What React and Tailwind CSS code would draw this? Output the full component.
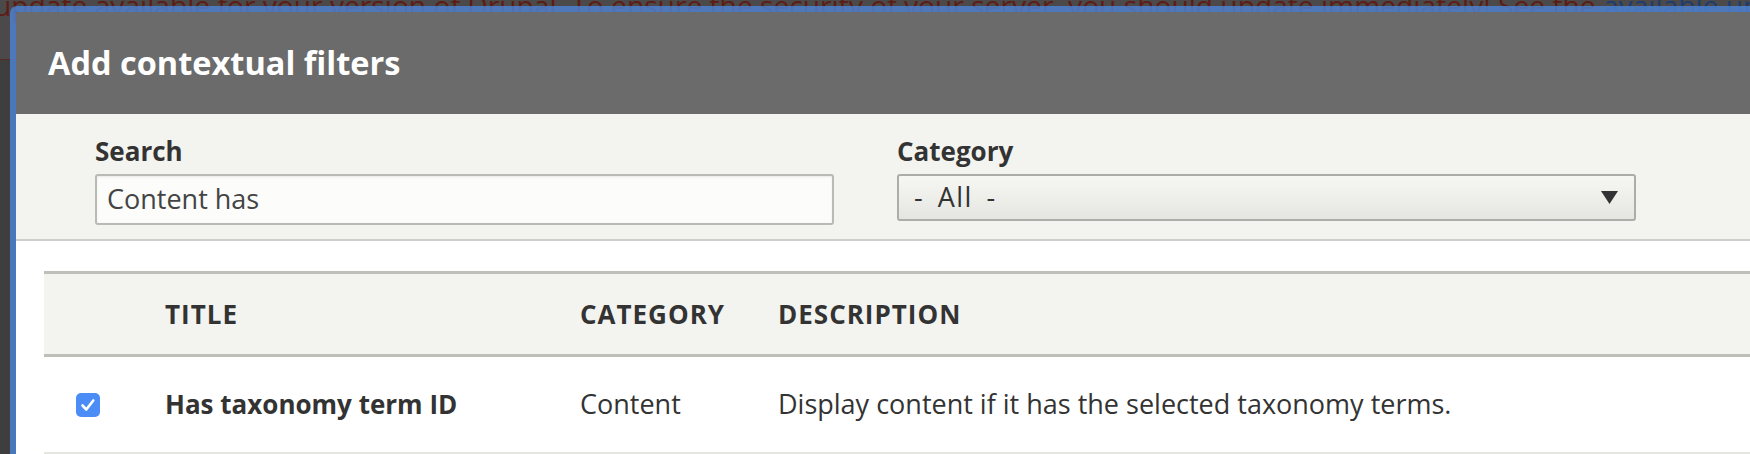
export default function App() {
  const cols = "flex items-center";
  return (
    <div className="relative w-[1750px] h-[454px] overflow-hidden bg-[#3e3e3e] font-['Open_Sans',sans-serif] text-[#333]">
      {/* page behind the overlay */}
      <div className="h-[60px] bg-[#4b4949] border-b border-[#5a2a24] overflow-hidden">
        <p className="mt-[-8px] ml-[-6px] whitespace-nowrap text-[28.2px] leading-[26px] text-[#5e1c14]">
          update available for your version of Drupal. To ensure the security of your server, you should update immediately! See the{" "}
          <span className="text-[#1c3d70]">available updates</span> page for more information.
        </p>
      </div>

      {/* dialog */}
      <div className="absolute left-[10px] top-[6px] w-[1800px] rounded-[7px] border-[6px] border-[#4d86da]/80 overflow-hidden">
        <div className="h-[102px] bg-[#6b6b6b] flex items-center pl-[32px]">
          <h1 className="text-white text-[32.5px] leading-none font-bold">Add contextual filters</h1>
        </div>

        <div className="bg-[#f3f3ef] pt-[24px] pb-[14px] pl-[79px] flex items-start gap-[63px] border-b-2 border-[#cdcdc9]">
          <div className="w-[739px]">
            <label className="block text-[26px] leading-[26px] font-bold">Search</label>
            <div className="mt-[10px] h-[51px] rounded-[3px] border-2 border-[#b9b9b6] bg-[#fcfcfa] shadow-[inset_0_1px_2px_rgba(0,0,0,0.08)] flex items-center pl-[10px] text-[27px] text-[#444]">
              Content has
            </div>
          </div>
          <div className="w-[739px]">
            <label className="block text-[26px] leading-[26px] font-bold">Category</label>
            <div className="mt-[10px] h-[47px] rounded-[3px] border-2 border-[#acacaa] bg-gradient-to-b from-[#f6f6f3] to-[#e6e6e1] flex items-center justify-between pl-[15px] pr-[16px] text-[27px] text-[#333]">
              <span className="tracking-[1.5px] [word-spacing:5px]">- All -</span>
              <svg width="17" height="13" viewBox="0 0 17 13">
                <polygon points="0,0 17,0 8.5,13" fill="#333" />
              </svg>
            </div>
          </div>
        </div>

        <div className="bg-white pt-[30px] pl-[28px] h-[400px]">
          <div className="border-t-[3px] border-[#bfbfba]">
            <div className={`${cols} h-[83px] bg-[#f3f3ef] border-b-[3px] border-[#bfbfba] text-[26px] font-bold uppercase tracking-[1px]`}>
              <div className="w-[121px]" />
              <div className="w-[415px]">Title</div>
              <div className="w-[198px]">Category</div>
              <div>Description</div>
            </div>
            <div className={`${cols} h-[97px] border-b-2 border-[#e6e6e1] text-[27px]`}>
              <div className="w-[121px] pl-[32px] flex items-center">
                <span className="w-[24px] h-[24px] rounded-[5px] bg-[#4b8cf6] flex items-center justify-center">
                  <svg width="24" height="24" viewBox="0 0 24 24">
                    <path d="M6.5 12.5l3.8 4 7-9" fill="none" stroke="white" strokeWidth="2.6" strokeLinecap="round" strokeLinejoin="round" />
                  </svg>
                </span>
              </div>
              <div className="w-[415px] font-bold text-[26px]">Has taxonomy term ID</div>
              <div className="w-[198px]">Content</div>
              <div>Display content if it has the selected taxonomy terms.</div>
            </div>
          </div>
        </div>
      </div>
    </div>
  );
}
